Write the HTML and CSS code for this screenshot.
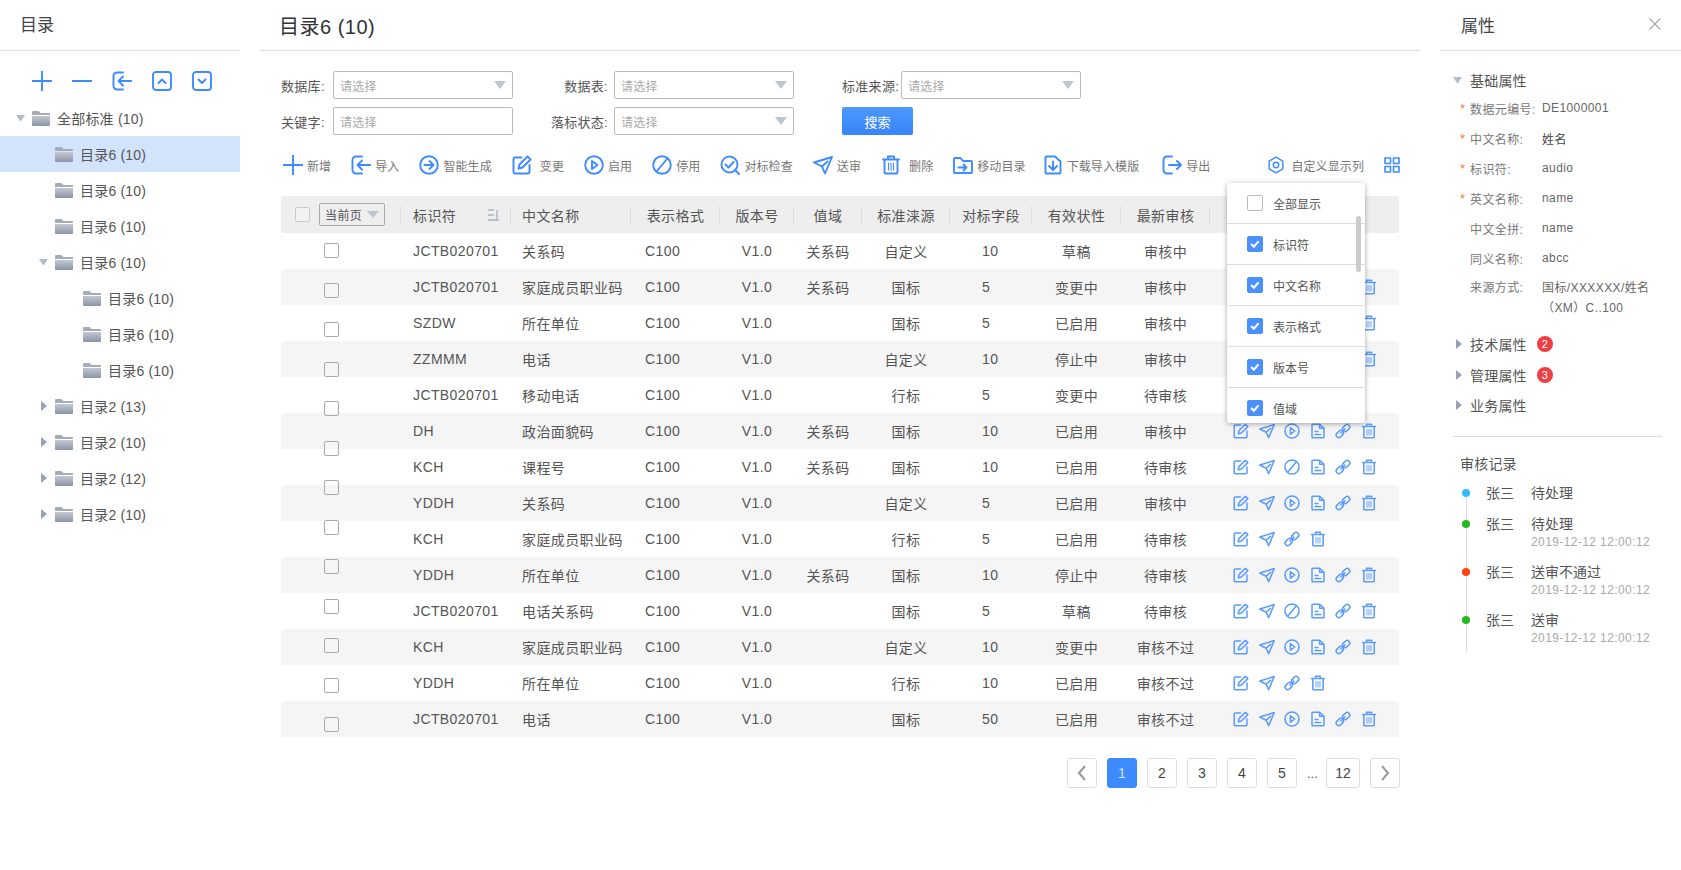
FILE: index.html
```html
<!DOCTYPE html>
<html lang="zh-CN">
<head>
    <meta charset="UTF-8">
    <meta name="viewport" content="width=device-width, initial-scale=1.0">
    <title>目录6</title>
    <link rel="stylesheet" href="styles.css">
</head>
<body>
    <!-- icon sprite -->
    <svg class="sprite" xmlns="http://www.w3.org/2000/svg">
        <defs>
            <linearGradient id="folderBody" x1="0" y1="0" x2="0" y2="1">
                <stop offset="0" stop-color="#c3c8d2"/>
                <stop offset="1" stop-color="#8b94a6"/>
            </linearGradient>
        </defs>
        <symbol id="i-folder" viewBox="0 0 18 15">
            <path d="M1 0h5.5L8.5 2H17a1 1 0 0 1 1 1v1H0V1a1 1 0 0 1 1-1z" fill="#a4abb9" stroke="none"/>
            <path d="M0 5h18v9a1 1 0 0 1-1 1H1a1 1 0 0 1-1-1z" fill="url(#folderBody)" stroke="none"/>
        </symbol>
        <symbol id="i-plus" viewBox="0 0 20 20"><path d="M10 0v20M0 10h20"/></symbol>
        <symbol id="i-minus" viewBox="0 0 20 20"><path d="M0 10h20"/></symbol>
        <symbol id="i-import" viewBox="0 0 20 20"><path d="M11 1.5H5A3.5 3.5 0 0 0 1.5 5v10A3.5 3.5 0 0 0 5 18.5h6M19.5 10h-13M11 5.500 6.500 10l4.500 4.500"/></symbol>
        <symbol id="i-export" viewBox="0 0 20 20"><path d="M10 1.5H5A3.5 3.5 0 0 0 1.5 5v10A3.5 3.5 0 0 0 5 18.5h5M7 10h12M15 6l4 4-4 4"/></symbol>
        <symbol id="i-up" viewBox="0 0 20 20"><rect x="1" y="1" width="18" height="18" rx="3"/><path d="M6.500 12 10 8.500l3.500 3.500"/></symbol>
        <symbol id="i-down" viewBox="0 0 20 20"><rect x="1" y="1" width="18" height="18" rx="3"/><path d="M6.500 8.500 10 12l3.500-3.500"/></symbol>
        <symbol id="i-smart" viewBox="0 0 20 20"><circle cx="10" cy="10" r="8.800"/><path d="M5.500 10h9M10.500 6l4 4-4 4"/></symbol>
        <symbol id="i-edit" viewBox="0 0 20 20"><path d="M9.500 2.500H3A1.500 1.500 0 0 0 1.500 4v13A1.500 1.500 0 0 0 3 18.500h13a1.500 1.500 0 0 0 1.500-1.500v-7"/><path d="M6.500 13.500 7.500 9.500 15.500 1.500l3 3-8 8z"/></symbol>
        <symbol id="i-play" viewBox="0 0 20 20"><circle cx="10" cy="10" r="8.800"/><path d="M8 6l5.500 4L8 14z"/></symbol>
        <symbol id="i-stop" viewBox="0 0 20 20"><circle cx="10" cy="10" r="8.800"/><path d="M4.500 16.500 15.500 3.500"/></symbol>
        <symbol id="i-check" viewBox="0 0 20 20"><circle cx="9.500" cy="9.500" r="8"/><path d="M5.500 9.500l3 3 5-5.500M15 15l4 4"/></symbol>
        <symbol id="i-send" viewBox="0 0 20 20"><path d="M1 7.500 19 2l-7 16.500-3-7zM9 11.500 14.500 6.500"/></symbol>
        <symbol id="i-trash" viewBox="0 0 20 20"><path d="M2 4.500h16M7 4.500v-3h6v3M3.500 4.500V17.500a1 1 0 0 0 1 1h11a1 1 0 0 0 1-1V4.500"/><path class="thin" d="M7.500 8v7M10 8v7M12.500 8v7"/></symbol>
        <symbol id="i-move" viewBox="0 0 20 20"><path d="M1 4a1 1 0 0 1 1-1h5.500L10 6h8a1 1 0 0 1 1 1v10a1 1 0 0 1-1 1H2a1 1 0 0 1-1-1z"/><path d="M5.500 12.500h8M10.500 9.500l3 3-3 3"/></symbol>
        <symbol id="i-load" viewBox="0 0 20 20"><path d="M2.500 2.500a1 1 0 0 1 1-1H12l5.500 5V17.500a1 1 0 0 1-1 1h-13a1 1 0 0 1-1-1z"/><path d="M10 6.500V15M6 11l4 4 4-4"/></symbol>
        <symbol id="i-gear" viewBox="0 0 20 20"><path d="M10 1.200l7.600 4.400v8.800L10 18.800l-7.600-4.400V5.600z"/><circle cx="10" cy="10" r="3"/></symbol>
        <symbol id="i-grid" viewBox="0 0 16 16"><rect x="1" y="1" width="5.500" height="5.500"/><rect x="9.500" y="1" width="5.500" height="5.500"/><rect x="1" y="9.500" width="5.500" height="5.500"/><rect x="9.500" y="9.500" width="5.500" height="5.500"/></symbol>
        <symbol id="i-doc" viewBox="0 0 20 20"><path d="M2.500 2.500a1 1 0 0 1 1-1H12l5.500 5V17.500a1 1 0 0 1-1 1h-13a1 1 0 0 1-1-1zM12 1.500v5h5.500M6.500 10.500H10M6.500 14.500h7"/></symbol>
        <symbol id="i-link" viewBox="0 0 20 20"><rect x="1" y="10.500" width="10" height="6.500" rx="3.250" transform="rotate(-45 6 13.750)"/><rect x="9" y="3" width="10" height="6.500" rx="3.250" transform="rotate(-45 14 6.250)"/><path d="M7.500 12.500l5-5"/></symbol>
        <symbol id="i-sort" viewBox="0 0 14 14"><path d="M1 2h6M1 7h6M1 12h11M10 2v10"/></symbol>
        <symbol id="i-close" viewBox="0 0 12 12"><path d="M.5.500l11 11M11.500.500l-11 11"/></symbol>
        <symbol id="i-tick" viewBox="0 0 16 16"><path d="M3.500 8l3.200 3L12 5"/></symbol>
    </svg>

    <div class="page">
        <!-- left tree -->
        <aside class="tree-panel">
            <h2 class="panel-title">目录</h2>
            <div class="tree-tools">
                <svg class="ico ico-20"><use href="#i-plus"/></svg>
                <svg class="ico ico-20"><use href="#i-minus"/></svg>
                <svg class="ico ico-20"><use href="#i-import"/></svg>
                <svg class="ico ico-20"><use href="#i-up"/></svg>
                <svg class="ico ico-20"><use href="#i-down"/></svg>
            </div>
            <ul class="tree">
                <li class="tree-item level-0"><span class="arrow-down"></span><svg class="folder"><use href="#i-folder"/></svg>全部标准 (10)</li>
                <li class="tree-item level-1 selected"><span class="arrow-none"></span><svg class="folder"><use href="#i-folder"/></svg>目录6 (10)</li>
                <li class="tree-item level-1"><span class="arrow-none"></span><svg class="folder"><use href="#i-folder"/></svg>目录6 (10)</li>
                <li class="tree-item level-1"><span class="arrow-none"></span><svg class="folder"><use href="#i-folder"/></svg>目录6 (10)</li>
                <li class="tree-item level-1"><span class="arrow-down"></span><svg class="folder"><use href="#i-folder"/></svg>目录6 (10)</li>
                <li class="tree-item level-2"><span class="arrow-none"></span><svg class="folder"><use href="#i-folder"/></svg>目录6 (10)</li>
                <li class="tree-item level-2"><span class="arrow-none"></span><svg class="folder"><use href="#i-folder"/></svg>目录6 (10)</li>
                <li class="tree-item level-2"><span class="arrow-none"></span><svg class="folder"><use href="#i-folder"/></svg>目录6 (10)</li>
                <li class="tree-item level-1"><span class="arrow-right"></span><svg class="folder"><use href="#i-folder"/></svg>目录2 (13)</li>
                <li class="tree-item level-1"><span class="arrow-right"></span><svg class="folder"><use href="#i-folder"/></svg>目录2 (10)</li>
                <li class="tree-item level-1"><span class="arrow-right"></span><svg class="folder"><use href="#i-folder"/></svg>目录2 (12)</li>
                <li class="tree-item level-1"><span class="arrow-right"></span><svg class="folder"><use href="#i-folder"/></svg>目录2 (10)</li>
            </ul>
        </aside>

        <!-- main list -->
        <main class="main">
            <h1 class="main-title">目录6 (10)</h1>

            <form class="filter">
                <label class="filter-label first">数据库:</label>
                <div class="field">请选择<span class="caret"></span></div>
                <label class="filter-label">数据表:</label>
                <div class="field">请选择<span class="caret"></span></div>
                <label class="filter-label source">标准来源:</label>
                <div class="field">请选择<span class="caret"></span></div>
                <label class="filter-label first">关键字:</label>
                <div class="field">请选择</div>
                <label class="filter-label">落标状态:</label>
                <div class="field">请选择<span class="caret"></span></div>
                <button class="search-btn" type="button">搜索</button>
            </form>

            <div class="toolbar">
                <a class="tool"><svg class="ico ico-20"><use href="#i-plus"/></svg>新增</a>
                <a class="tool"><svg class="ico ico-20"><use href="#i-import"/></svg>导入</a>
                <a class="tool"><svg class="ico ico-20"><use href="#i-smart"/></svg>智能生成</a>
                <a class="tool wide"><svg class="ico ico-20"><use href="#i-edit"/></svg>变更</a>
                <a class="tool"><svg class="ico ico-20"><use href="#i-play"/></svg>启用</a>
                <a class="tool"><svg class="ico ico-20"><use href="#i-stop"/></svg>停用</a>
                <a class="tool"><svg class="ico ico-20"><use href="#i-check"/></svg>对标检查</a>
                <a class="tool"><svg class="ico ico-20"><use href="#i-send"/></svg>送审</a>
                <a class="tool wide"><svg class="ico ico-20"><use href="#i-trash"/></svg>删除</a>
                <a class="tool tool-move"><svg class="ico ico-20"><use href="#i-move"/></svg>移动目录</a>
                <a class="tool tool-load"><svg class="ico ico-20"><use href="#i-load"/></svg>下载导入模版</a>
                <a class="tool"><svg class="ico ico-20"><use href="#i-export"/></svg>导出</a>
                <a class="tool custom"><svg class="ico ico-18"><use href="#i-gear"/></svg>自定义显示列</a>
                <svg class="ico ico-16 grid-switch"><use href="#i-grid"/></svg>
            </div>

            <div class="table-wrap">
                <table class="grid">
                    <colgroup>
                        <col class="c-check"><col class="c-code"><col class="c-name"><col class="c-format"><col class="c-ver">
                        <col class="c-range"><col class="c-source"><col class="c-count"><col class="c-valid"><col class="c-audit"><col class="c-ops">
                    </colgroup>
                    <thead>
                        <tr>
                            <th class="head-check"><div class="head-check-inner"><span class="box head-box"></span><span class="page-select">当前页<span class="caret small"></span></span></div></th>
                            <th class="t-left">标识符<svg class="sort"><use href="#i-sort"/></svg></th>
                            <th class="t-name">中文名称</th>
                            <th>表示格式</th>
                            <th>版本号</th>
                            <th>值域</th>
                            <th>标准涞源</th>
                            <th>对标字段</th>
                            <th>有效状性</th>
                            <th>最新审核</th>
                            <th class="no-line"></th>
                        </tr>
                    </thead>
                    <tbody>
                        <tr><td></td><td class="t-left">JCTB020701</td><td class="t-name">关系码</td><td class="t-fmt">C100</td><td>V1.0</td><td>关系码</td><td>自定义</td><td class="t-num">10</td><td>草稿</td><td>审核中</td>
                            <td><div class="ops"><svg class="ico ico-16"><use href="#i-edit"/></svg><svg class="ico ico-16"><use href="#i-send"/></svg><svg class="ico ico-16"><use href="#i-link"/></svg><svg class="ico ico-16"><use href="#i-trash"/></svg></div></td></tr>
                        <tr><td></td><td class="t-left">JCTB020701</td><td class="t-name">家庭成员职业码</td><td class="t-fmt">C100</td><td>V1.0</td><td>关系码</td><td>国标</td><td class="t-num">5</td><td>变更中</td><td>审核中</td>
                            <td><div class="ops"><svg class="ico ico-16"><use href="#i-edit"/></svg><svg class="ico ico-16"><use href="#i-send"/></svg><svg class="ico ico-16"><use href="#i-play"/></svg><svg class="ico ico-16"><use href="#i-doc"/></svg><svg class="ico ico-16"><use href="#i-link"/></svg><svg class="ico ico-16"><use href="#i-trash"/></svg></div></td></tr>
                        <tr><td></td><td class="t-left">SZDW</td><td class="t-name">所在单位</td><td class="t-fmt">C100</td><td>V1.0</td><td></td><td>国标</td><td class="t-num">5</td><td>已启用</td><td>审核中</td>
                            <td><div class="ops"><svg class="ico ico-16"><use href="#i-edit"/></svg><svg class="ico ico-16"><use href="#i-send"/></svg><svg class="ico ico-16"><use href="#i-stop"/></svg><svg class="ico ico-16"><use href="#i-doc"/></svg><svg class="ico ico-16"><use href="#i-link"/></svg><svg class="ico ico-16"><use href="#i-trash"/></svg></div></td></tr>
                        <tr><td></td><td class="t-left">ZZMMM</td><td class="t-name">电话</td><td class="t-fmt">C100</td><td>V1.0</td><td></td><td>自定义</td><td class="t-num">10</td><td>停止中</td><td>审核中</td>
                            <td><div class="ops"><svg class="ico ico-16"><use href="#i-edit"/></svg><svg class="ico ico-16"><use href="#i-send"/></svg><svg class="ico ico-16"><use href="#i-play"/></svg><svg class="ico ico-16"><use href="#i-doc"/></svg><svg class="ico ico-16"><use href="#i-link"/></svg><svg class="ico ico-16"><use href="#i-trash"/></svg></div></td></tr>
                        <tr><td></td><td class="t-left">JCTB020701</td><td class="t-name">移动电话</td><td class="t-fmt">C100</td><td>V1.0</td><td></td><td>行标</td><td class="t-num">5</td><td>变更中</td><td>待审核</td>
                            <td><div class="ops"><svg class="ico ico-16"><use href="#i-edit"/></svg><svg class="ico ico-16"><use href="#i-send"/></svg><svg class="ico ico-16"><use href="#i-link"/></svg><svg class="ico ico-16"><use href="#i-trash"/></svg></div></td></tr>
                        <tr><td></td><td class="t-left">DH</td><td class="t-name">政治面貌码</td><td class="t-fmt">C100</td><td>V1.0</td><td>关系码</td><td>国标</td><td class="t-num">10</td><td>已启用</td><td>审核中</td>
                            <td><div class="ops"><svg class="ico ico-16"><use href="#i-edit"/></svg><svg class="ico ico-16"><use href="#i-send"/></svg><svg class="ico ico-16"><use href="#i-play"/></svg><svg class="ico ico-16"><use href="#i-doc"/></svg><svg class="ico ico-16"><use href="#i-link"/></svg><svg class="ico ico-16"><use href="#i-trash"/></svg></div></td></tr>
                        <tr><td></td><td class="t-left">KCH</td><td class="t-name">课程号</td><td class="t-fmt">C100</td><td>V1.0</td><td>关系码</td><td>国标</td><td class="t-num">10</td><td>已启用</td><td>待审核</td>
                            <td><div class="ops"><svg class="ico ico-16"><use href="#i-edit"/></svg><svg class="ico ico-16"><use href="#i-send"/></svg><svg class="ico ico-16"><use href="#i-stop"/></svg><svg class="ico ico-16"><use href="#i-doc"/></svg><svg class="ico ico-16"><use href="#i-link"/></svg><svg class="ico ico-16"><use href="#i-trash"/></svg></div></td></tr>
                        <tr><td></td><td class="t-left">YDDH</td><td class="t-name">关系码</td><td class="t-fmt">C100</td><td>V1.0</td><td></td><td>自定义</td><td class="t-num">5</td><td>已启用</td><td>审核中</td>
                            <td><div class="ops"><svg class="ico ico-16"><use href="#i-edit"/></svg><svg class="ico ico-16"><use href="#i-send"/></svg><svg class="ico ico-16"><use href="#i-play"/></svg><svg class="ico ico-16"><use href="#i-doc"/></svg><svg class="ico ico-16"><use href="#i-link"/></svg><svg class="ico ico-16"><use href="#i-trash"/></svg></div></td></tr>
                        <tr><td></td><td class="t-left">KCH</td><td class="t-name">家庭成员职业码</td><td class="t-fmt">C100</td><td>V1.0</td><td></td><td>行标</td><td class="t-num">5</td><td>已启用</td><td>待审核</td>
                            <td><div class="ops"><svg class="ico ico-16"><use href="#i-edit"/></svg><svg class="ico ico-16"><use href="#i-send"/></svg><svg class="ico ico-16"><use href="#i-link"/></svg><svg class="ico ico-16"><use href="#i-trash"/></svg></div></td></tr>
                        <tr><td></td><td class="t-left">YDDH</td><td class="t-name">所在单位</td><td class="t-fmt">C100</td><td>V1.0</td><td>关系码</td><td>国标</td><td class="t-num">10</td><td>停止中</td><td>待审核</td>
                            <td><div class="ops"><svg class="ico ico-16"><use href="#i-edit"/></svg><svg class="ico ico-16"><use href="#i-send"/></svg><svg class="ico ico-16"><use href="#i-play"/></svg><svg class="ico ico-16"><use href="#i-doc"/></svg><svg class="ico ico-16"><use href="#i-link"/></svg><svg class="ico ico-16"><use href="#i-trash"/></svg></div></td></tr>
                        <tr><td></td><td class="t-left">JCTB020701</td><td class="t-name">电话关系码</td><td class="t-fmt">C100</td><td>V1.0</td><td></td><td>国标</td><td class="t-num">5</td><td>草稿</td><td>待审核</td>
                            <td><div class="ops"><svg class="ico ico-16"><use href="#i-edit"/></svg><svg class="ico ico-16"><use href="#i-send"/></svg><svg class="ico ico-16"><use href="#i-stop"/></svg><svg class="ico ico-16"><use href="#i-doc"/></svg><svg class="ico ico-16"><use href="#i-link"/></svg><svg class="ico ico-16"><use href="#i-trash"/></svg></div></td></tr>
                        <tr><td></td><td class="t-left">KCH</td><td class="t-name">家庭成员职业码</td><td class="t-fmt">C100</td><td>V1.0</td><td></td><td>自定义</td><td class="t-num">10</td><td>变更中</td><td>审核不过</td>
                            <td><div class="ops"><svg class="ico ico-16"><use href="#i-edit"/></svg><svg class="ico ico-16"><use href="#i-send"/></svg><svg class="ico ico-16"><use href="#i-play"/></svg><svg class="ico ico-16"><use href="#i-doc"/></svg><svg class="ico ico-16"><use href="#i-link"/></svg><svg class="ico ico-16"><use href="#i-trash"/></svg></div></td></tr>
                        <tr><td></td><td class="t-left">YDDH</td><td class="t-name">所在单位</td><td class="t-fmt">C100</td><td>V1.0</td><td></td><td>行标</td><td class="t-num">10</td><td>已启用</td><td>审核不过</td>
                            <td><div class="ops"><svg class="ico ico-16"><use href="#i-edit"/></svg><svg class="ico ico-16"><use href="#i-send"/></svg><svg class="ico ico-16"><use href="#i-link"/></svg><svg class="ico ico-16"><use href="#i-trash"/></svg></div></td></tr>
                        <tr><td></td><td class="t-left">JCTB020701</td><td class="t-name">电话</td><td class="t-fmt">C100</td><td>V1.0</td><td></td><td>国标</td><td class="t-num">50</td><td>已启用</td><td>审核不过</td>
                            <td><div class="ops"><svg class="ico ico-16"><use href="#i-edit"/></svg><svg class="ico ico-16"><use href="#i-send"/></svg><svg class="ico ico-16"><use href="#i-play"/></svg><svg class="ico ico-16"><use href="#i-doc"/></svg><svg class="ico ico-16"><use href="#i-link"/></svg><svg class="ico ico-16"><use href="#i-trash"/></svg></div></td></tr>
                    </tbody>
                </table>

                <!-- the row checkboxes run in their own column over the table -->
                <div class="row-checks">
                    <span class="box"></span><span class="box"></span><span class="box"></span><span class="box"></span>
                    <span class="box"></span><span class="box"></span><span class="box"></span><span class="box"></span>
                    <span class="box"></span><span class="box"></span><span class="box"></span><span class="box"></span>
                    <span class="box"></span>
                </div>

                <div class="column-menu">
                    <div class="menu-row"><span class="menu-box"></span>全部显示</div>
                    <div class="menu-row"><span class="menu-box on"><svg class="tick"><use href="#i-tick"/></svg></span>标识符</div>
                    <div class="menu-row"><span class="menu-box on"><svg class="tick"><use href="#i-tick"/></svg></span>中文名称</div>
                    <div class="menu-row"><span class="menu-box on"><svg class="tick"><use href="#i-tick"/></svg></span>表示格式</div>
                    <div class="menu-row"><span class="menu-box on"><svg class="tick"><use href="#i-tick"/></svg></span>版本号</div>
                    <div class="menu-row"><span class="menu-box on"><svg class="tick"><use href="#i-tick"/></svg></span>值域</div>
                    <span class="menu-scroll"></span>
                </div>
            </div>

            <div class="pager">
                <a class="pg"><svg class="pg-arrow"><path d="M10 2 4 9l6 7"/></svg></a>
                <a class="pg active">1</a>
                <a class="pg">2</a>
                <a class="pg">3</a>
                <a class="pg">4</a>
                <a class="pg">5</a>
                <span class="pg-dots">...</span>
                <a class="pg pg-wide">12</a>
                <a class="pg"><svg class="pg-arrow"><path d="M4 2l6 7-6 7"/></svg></a>
            </div>
        </main>

        <!-- right properties -->
        <aside class="prop-panel">
            <div class="prop-title-bar">
                <h2 class="panel-title">属性</h2>
                <svg class="ico-close"><use href="#i-close"/></svg>
            </div>
            <div class="prop-body">
                <div class="prop-head open"><span class="arrow-down"></span>基础属性</div>
                <div class="attr"><span class="star">*</span><span class="attr-key">数据元编号:</span><span class="attr-val">DE1000001</span></div>
                <div class="attr"><span class="star">*</span><span class="attr-key">中文名称:</span><span class="attr-val dark">姓名</span></div>
                <div class="attr"><span class="star">*</span><span class="attr-key">标识符:</span><span class="attr-val">audio</span></div>
                <div class="attr"><span class="star">*</span><span class="attr-key">英文名称:</span><span class="attr-val">name</span></div>
                <div class="attr"><span class="star"></span><span class="attr-key">中文全拼:</span><span class="attr-val">name</span></div>
                <div class="attr"><span class="star"></span><span class="attr-key">同义名称:</span><span class="attr-val">abcc</span></div>
                <div class="attr multi"><span class="star"></span><span class="attr-key">来源方式:</span><span class="attr-val">国标/XXXXXX/姓名（XM）C..100</span></div>
                <div class="prop-head"><span class="arrow-right"></span>技术属性<span class="badge">2</span></div>
                <div class="prop-head"><span class="arrow-right"></span>管理属性<span class="badge">3</span></div>
                <div class="prop-head"><span class="arrow-right"></span>业务属性</div>

                <div class="audit">
                    <div class="audit-title">审核记录</div>
                    <ul class="timeline">
                        <li class="tl-item short"><span class="dot blue"></span><span class="tl-name">张三</span><div class="tl-text">待处理</div></li>
                        <li class="tl-item"><span class="dot green"></span><span class="tl-name">张三</span><div class="tl-text">待处理<div class="tl-date">2019-12-12 12:00:12</div></div></li>
                        <li class="tl-item"><span class="dot red"></span><span class="tl-name">张三</span><div class="tl-text">送审不通过<div class="tl-date">2019-12-12 12:00:12</div></div></li>
                        <li class="tl-item"><span class="dot green"></span><span class="tl-name">张三</span><div class="tl-text">送审<div class="tl-date">2019-12-12 12:00:12</div></div></li>
                    </ul>
                </div>
            </div>
        </aside>
    </div>
</body>
</html>
```

FILE: styles.css
```css
* {
    box-sizing: border-box;
}

body {
    margin: 0;
    background: #fff;
    color: #555;
    font-family: "Liberation Sans", "Noto Sans CJK SC", sans-serif;
    font-size: 14px;
}

h1, h2, ul {
    margin: 0;
    padding: 0;
    font-weight: 400;
    list-style: none;
}

.sprite {
    display: block;
    width: 0;
    height: 0;
    overflow: hidden;
}

.page {
    display: flex;
    width: 1681px;
    height: 870px;
    overflow: hidden;
}

/* icons */
.ico {
    flex: none;
    fill: none;
    stroke: #3d8bff;
    stroke-width: 1.9;
    stroke-linecap: round;
    stroke-linejoin: round;
}
.ico-20 { width: 20px; height: 20px; }
.ico-18 { width: 18px; height: 18px; stroke-width: 1.6; }
.ico-16 { width: 16px; height: 16px; stroke: #5a9bff; }
.thin { stroke-width: 1.1; }
.grid-switch { stroke-width: 1.6; stroke: #3d8bff; }

.arrow-down, .arrow-right, .arrow-none {
    flex: none;
    display: inline-block;
    width: 9px;
    margin-right: 7px;
}
.arrow-down {
    height: 0;
    border-left: 4.5px solid transparent;
    border-right: 4.5px solid transparent;
    border-top: 6px solid #b4bccb;
}
.arrow-right {
    width: 0;
    height: 0;
    margin-left: 2px;
    margin-right: 8px;
    border-top: 5px solid transparent;
    border-bottom: 5px solid transparent;
    border-left: 6px solid #99a2b4;
}

/* left tree */
.tree-panel {
    flex: none;
    width: 240px;
    margin-right: 20px;
}
.panel-title {
    height: 51px;
    padding-left: 20px;
    border-bottom: 1px solid #ddd;
    color: #444;
    font-size: 17px;
    line-height: 52px;
}
.tree-tools {
    display: flex;
    gap: 20px;
    padding: 20px 0 9px 32px;
}
.tree-item {
    display: flex;
    align-items: center;
    height: 36px;
    letter-spacing: .2px;
}
.level-0 { padding-left: 16px; }
.level-1 { padding-left: 39px; }
.level-2 { padding-left: 67px; }
.selected { background: #d2e3fc; }
.folder {
    flex: none;
    width: 18px;
    height: 15px;
    margin-right: 7px;
}

/* main */
.main {
    flex: none;
    width: 1160px;
}
.main-title {
    height: 51px;
    padding-left: 19px;
    border-bottom: 1px solid #ddd;
    color: #333;
    font-size: 20px;
    line-height: 54px;
    letter-spacing: .5px;
}

.filter {
    display: grid;
    grid-template-columns: 52px 180px 101px 180px 107px 180px;
    grid-auto-rows: 28px;
    row-gap: 8px;
    align-items: center;
    padding: 20px 0 0 21px;
    font-size: 12px;
}
.filter-label {
    padding-right: 6px;
    color: #555;
    font-size: 13px;
    letter-spacing: .3px;
    text-align: right;
    white-space: nowrap;
}
.filter-label.first {
    padding-right: 0;
    text-align: left;
}
.filter-label.source {
    padding-left: 48px;
    padding-right: 0;
    text-align: left;
}
.field {
    display: flex;
    align-items: center;
    justify-content: space-between;
    height: 28px;
    padding: 0 6px;
    border: 1px solid #bbb;
    border-radius: 2px;
    color: #aaa;
    font-size: 12px;
    letter-spacing: .3px;
}
.caret {
    display: inline-block;
    border-left: 6px solid transparent;
    border-right: 6px solid transparent;
    border-top: 8px solid #bfc5d0;
}
.caret.small {
    margin-left: 4px;
    border-top-width: 7px;
}
.search-btn {
    grid-column: 5 / 7;
    width: 71px;
    height: 28px;
    margin-left: 48px;
    border: 0;
    border-radius: 2px;
    background: linear-gradient(#4c99ff, #3884fa);
    color: #fff;
    font-family: inherit;
    font-size: 13px;
}

.toolbar {
    display: flex;
    align-items: center;
    gap: 20px;
    height: 20px;
    margin: 20px 0 21px 23px;
    padding-right: 20px;
    color: #777;
    font-size: 12px;
    letter-spacing: .1px;
}
.tool {
    display: flex;
    align-items: center;
    gap: 4px;
    white-space: nowrap;
}
.tool.wide { gap: 8px; }
.tool-move { margin-right: -3px; }
.tool-load { margin-right: 3px; }
.tool.custom {
    gap: 6px;
    margin-left: auto;
}

/* table */
.table-wrap {
    position: relative;
    width: 1118px;
    margin-left: 21px;
}
.grid {
    width: 100%;
    table-layout: fixed;
    border-collapse: separate;
    border-spacing: 0;
    letter-spacing: .4px;
}
.c-check { width: 120px; }
.c-code { width: 110px; }
.c-name { width: 120px; }
.c-format { width: 89px; }
.c-ver { width: 74px; }
.c-range { width: 68px; }
.c-source { width: 88px; }
.c-count { width: 82px; }
.c-valid { width: 89px; }
.c-audit { width: 89px; }
.c-ops { width: 189px; }

.grid th, .grid td {
    height: 36px;
    padding: 0;
    font-weight: 400;
    text-align: center;
    white-space: nowrap;
}
.grid th {
    height: 37px;
    background: #eee linear-gradient(#ddd, #ddd) right center / 1px 18px no-repeat;
}
.grid th.no-line { background: #eee; }
.grid th:first-child, .grid td:first-child { border-radius: 3px 0 0 3px; }
.grid th:last-child, .grid td:last-child { border-radius: 0 3px 3px 0; }
.grid tbody tr:nth-child(even) td { background: #f5f5f5; }
.grid .t-left {
    padding-left: 12px;
    text-align: left;
}
.grid .t-name {
    padding-left: 11px;
    text-align: left;
}
.grid .t-fmt {
    padding-left: 14px;
    text-align: left;
}
.grid .t-num {
    padding-left: 32px;
    text-align: left;
}
.sort {
    float: right;
    width: 14px;
    height: 14px;
    margin: 3px 10px 0 0;
    fill: none;
    stroke: #aab2c0;
    stroke-width: 1.3;
}
.head-check-inner {
    display: flex;
    align-items: center;
    gap: 9px;
    padding-left: 14px;
}
.page-select {
    display: flex;
    align-items: center;
    justify-content: space-between;
    width: 66px;
    height: 23px;
    padding: 0 5px;
    border: 1px solid #aaa;
    border-radius: 2px;
    font-size: 12px;
    letter-spacing: .4px;
}
.box {
    display: block;
    width: 15px;
    height: 15px;
    border: 1px solid #aaa;
    border-radius: 2px;
}
.head-box {
    border-color: #ccc;
    background: #f3f3f3;
}
.row-checks {
    position: absolute;
    top: 47px;
    left: 43px;
    display: flex;
    flex-direction: column;
    gap: 24.5px;
}
.ops {
    display: flex;
    gap: 9.5px;
    padding-left: 23px;
}

/* column menu */
.column-menu {
    position: absolute;
    top: -13px;
    left: 946px;
    width: 138px;
    height: 240px;
    overflow: hidden;
    border-radius: 3px;
    background: #fff;
    box-shadow: 0 1px 5px rgba(0, 0, 0, .35);
    font-size: 12px;
}
.menu-row {
    display: flex;
    align-items: center;
    gap: 10px;
    height: 41px;
    padding-left: 20px;
    border-bottom: 1px solid #ddd;
}
.menu-box {
    display: flex;
    flex: none;
    width: 16px;
    height: 16px;
    border: 1px solid #bbb;
    border-radius: 2px;
}
.menu-box.on {
    border-color: #4a90ff;
    background: #4a90ff;
}
.tick {
    width: 14px;
    height: 14px;
    fill: none;
    stroke: #fff;
    stroke-width: 2.4;
}
.menu-scroll {
    position: absolute;
    top: 33px;
    right: 4px;
    width: 5px;
    height: 56px;
    border-radius: 3px;
    background: #ccc;
}

/* pager */
.pager {
    display: flex;
    justify-content: flex-end;
    align-items: center;
    gap: 10px;
    width: 1119px;
    margin: 21px 0 0 21px;
}
.pg {
    display: flex;
    align-items: center;
    justify-content: center;
    width: 30px;
    height: 30px;
    border: 1px solid #ddd;
    border-radius: 3px;
    color: #444;
    font-size: 14px;
}
.pg-wide { width: 34px; }
.pg.active {
    border-color: #3d8bff;
    background: #3d8bff;
    color: #d5e6ff;
}
.pg-dots {
    width: 9px;
    font-size: 13px;
    text-align: center;
}
.pg-arrow {
    width: 14px;
    height: 18px;
    fill: none;
    stroke: #999;
    stroke-width: 2;
}

/* right panel */
.prop-panel {
    flex: none;
    width: 240px;
    margin-left: 21px;
}
.prop-title-bar {
    display: flex;
    align-items: center;
    justify-content: space-between;
    height: 51px;
    padding-bottom: 2px;
    border-bottom: 1px solid #ddd;
}
.prop-title-bar .panel-title {
    height: auto;
    border: 0;
    line-height: normal;
}
.ico-close {
    width: 12px;
    height: 12px;
    margin-right: 20px;
    fill: none;
    stroke: #aaa;
    stroke-width: 1.2;
}
.prop-body {
    padding: 15px 19px 0 12px;
}
.prop-head {
    display: flex;
    align-items: center;
    height: 30.5px;
    letter-spacing: .2px;
}
.prop-head.open { height: 27px; }
.prop-head.open .arrow-down { margin-right: 8px; }
.prop-head .arrow-right { margin-left: 3px; }
.badge {
    width: 16px;
    height: 16px;
    margin-left: 10px;
    border-radius: 50%;
    background: #ee3e44;
    color: #fff;
    font-size: 11px;
    line-height: 16px;
    text-align: center;
}
.attr {
    display: flex;
    align-items: center;
    height: 30px;
    padding-left: 6px;
    font-size: 12px;
    letter-spacing: .4px;
}
.attr.multi {
    align-items: flex-start;
    height: 56px;
    padding-top: 5px;
    line-height: 20px;
}
.star {
    flex: none;
    width: 11px;
    padding-left: 1px;
    color: #f08030;
    font-size: 13px;
}
.attr-key {
    flex: none;
    width: 72px;
    color: #777;
}
.attr-val {
    color: #666;
}
.attr-val.dark { color: #444; }

.audit {
    margin-top: 15px;
    padding-top: 17px;
    border-top: 1px solid #ddd;
}
.audit-title {
    height: 20px;
    padding-left: 7px;
    line-height: 20px;
    letter-spacing: .2px;
}
.timeline {
    margin-top: 10px;
    background: linear-gradient(#ddd, #ddd) 12.5px 9px / 1px calc(100% - 9px) no-repeat;
}
.tl-item {
    display: flex;
    height: 48px;
    line-height: 18px;
}
.tl-item.short { height: 31px; }
.tl-item:last-child { height: 42px; }
.dot {
    flex: none;
    width: 8px;
    height: 8px;
    margin: 5px 16px 0 9px;
    border-radius: 50%;
}
.dot.blue { background: #33bbff; }
.dot.green { background: #22bb22; }
.dot.red { background: #ff4411; }
.tl-name {
    flex: none;
    width: 45px;
}
.tl-date {
    color: #aaa;
    font-size: 12px;
    letter-spacing: .4px;
}
```
